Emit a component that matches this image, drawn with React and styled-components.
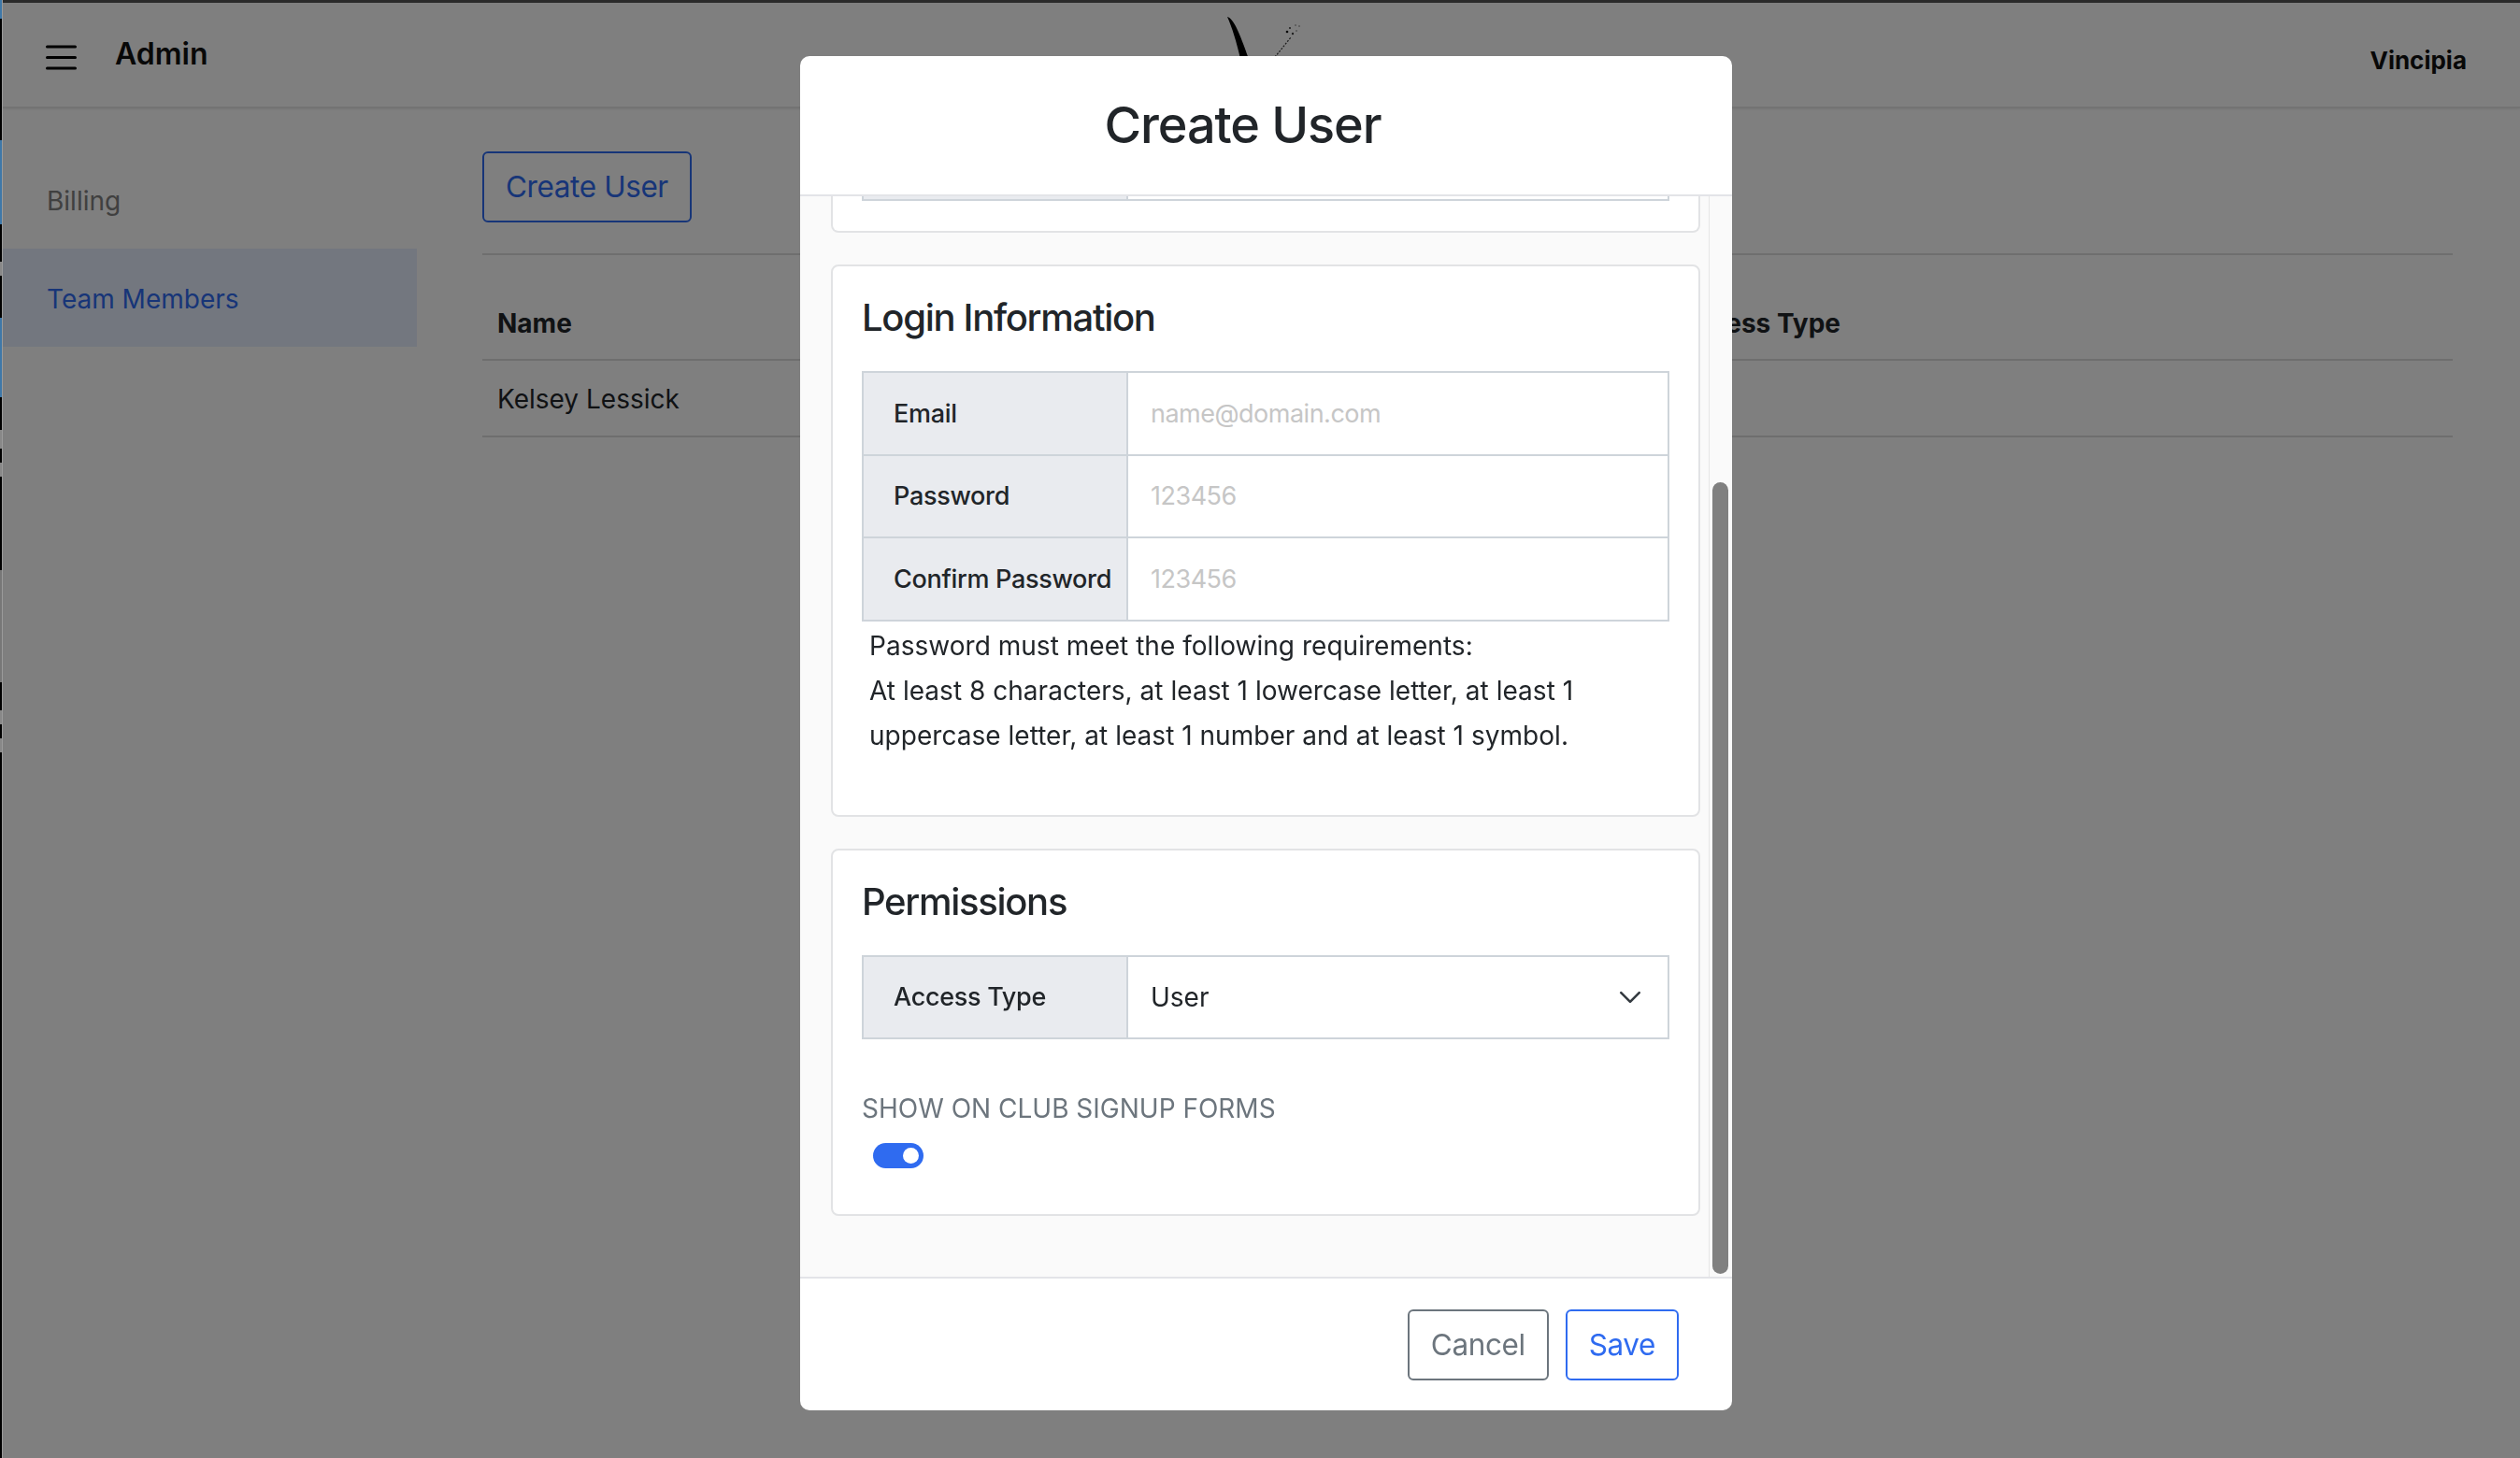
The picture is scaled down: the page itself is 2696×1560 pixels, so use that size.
import React from 'react'
import styled, { createGlobalStyle } from 'styled-components'

const GlobalStyle = createGlobalStyle`
    html, body {
        margin: 0;
        height: 100%;
        overflow: hidden;
    }
    body {
        font-family: Inter, "Liberation Sans", sans-serif;
        font-size: 28px;
        color: #212529;
        background: #fff;
    }
    * {
        box-sizing: border-box;
    }
`

const Page = styled.div`
    display: flex;
    width: 2696px;
    height: 1560px;
`

// sliver of the desktop showing behind the browser window
const DesktopEdge = styled.div`
    position: relative;
    z-index: 20;
    flex: 0 0 3px;
    border-right: 1px solid #9a9a9a;
    background: linear-gradient(
        to bottom,
        #3f78a8 0 20px, #000 20px 150px,
        #3f78a8 150px 240px, #000 240px 280px,
        #888 280px 295px, #000 295px 340px,
        #3f78a8 340px 425px, #000 425px 460px,
        #888 460px 480px, #000 480px 495px,
        #888 495px 510px, #000 510px 610px,
        #777 610px 730px, #000 730px 760px,
        #888 760px 775px, #000 775px 790px,
        #888 790px 805px, #000 805px
    );
`

const Main = styled.div`
    flex: 1;
    min-width: 0;
    display: flex;
    flex-direction: column;
    border-top: 3px solid #555;
`

const TopBar = styled.header`
    flex: 0 0 113px;
    display: grid;
    grid-template-columns: 1fr auto 1fr;
    padding: 0 57px 0 46px;
    border-bottom: 2px solid #e6e6e6;
    box-shadow: 0 1px 3px rgba(0, 0, 0, 0.08);
`

const TopLeft = styled.div`
    display: flex;
    align-items: center;
    gap: 41px;
    padding-bottom: 2px;
`

const Hamburger = styled.svg`
    width: 33px;
    height: 27px;
    margin-top: 8px;
`

const PageName = styled.div`
    font-size: 32px;
    font-weight: 600;
    color: #111;
    line-height: 40px;
`

const Logo = styled.svg`
    width: 85px;
    height: 55px;
    margin: 12px 0 0 14px;
`

const ClubName = styled.div`
    display: flex;
    align-items: center;
    justify-content: flex-end;
    padding-top: 11px;
    font-size: 26px;
    font-weight: 700;
    color: #111;
`

const Columns = styled.div`
    flex: 1;
    display: flex;
`

const SideNav = styled.nav`
    flex: 0 0 443px;
    padding-top: 45px;
`

const NavItem = styled.div`
    height: 105px;
    display: flex;
    align-items: center;
    padding: 3px 0 0 47px;
    font-size: 28px;
    color: ${p => (p.$active ? '#2f6bf0' : '#808080')};
    background: ${p => (p.$active ? '#e6eeff' : 'transparent')};
`

const Content = styled.main`
    flex: 1;
    padding: 46px 72px 0 70px;
`

const OutlineButton = styled.button`
    height: 76px;
    padding: 0 23px;
    font-family: inherit;
    font-size: 31.5px;
    letter-spacing: -0.4px;
    line-height: 1;
    color: ${p => p.$color};
    background: #fff;
    border: 2px solid ${p => p.$color};
    border-radius: 6px;
`

const Divider = styled.hr`
    margin: 33px 0 0;
    border: 0;
    border-top: 2px solid #dcdcdc;
`

const TableRow = styled.div`
    display: grid;
    grid-template-columns: 1261px 1fr;
    align-items: center;
    height: ${p => p.$height}px;
    margin-top: ${p => p.$top || 0}px;
    padding: ${p => (p.$head ? 0 : 2)}px 0 0 16px;
    border-bottom: 2px solid #dcdcdc;
    font-size: 28px;
    font-weight: ${p => (p.$head ? 700 : 400)};
    color: #212529;
`

const Overlay = styled.div`
    position: fixed;
    inset: 0;
    z-index: 10;
    display: flex;
    align-items: flex-start;
    padding: 60px 0 0 856px;
    background: rgba(0, 0, 0, 0.5);
`

const Modal = styled.div`
    width: 997px;
    height: 1449px;
    display: flex;
    flex-direction: column;
    overflow: hidden;
    background: #fff;
    border-radius: 10px;
`

const ModalHead = styled.div`
    flex: 0 0 150px;
    display: flex;
    align-items: center;
    justify-content: center;
    padding: 0 50px 1px 0;
    border-bottom: 2px solid #e3e4e8;
`

const ModalTitle = styled.h2`
    margin: 0;
    font-size: 54px;
    font-weight: 500;
    letter-spacing: -1.1px;
    color: #212529;
`

const ModalBody = styled.div`
    flex: 1;
    min-height: 0;
    display: flex;
    background: #fafafa;
`

const ScrollArea = styled.div`
    flex: 1;
    min-width: 0;
    overflow: hidden;
    padding: 0 9px 0 33px;
`

const ScrollTrack = styled.div`
    flex: 0 0 25px;
    padding: 306px 4px 0 3px;
    border-left: 1px solid #e6e6e6;
`

const ScrollThumb = styled.div`
    height: 847px;
    background: #808080;
    border-radius: 9px;
`

const Card = styled.section`
    margin-top: 34px;
    padding: ${p => p.$pad || '31px 31px 0'};
    padding-bottom: ${p => p.$bottom}px;
    background: #fff;
    border: 2px solid #e2e3e5;
    border-radius: 8px;
`

// the card above, scrolled almost out of view
const ScrolledCard = styled(Card)`
    margin-top: -103px;
    border-top: 0;
`

const CardTitle = styled.h3`
    margin: 0 0 33px;
    font-size: 40px;
    line-height: 48px;
    font-weight: 500;
    letter-spacing: -1.3px;
    color: #212529;
`

const FieldRow = styled.div`
    display: grid;
    grid-template-columns: 283px 1fr;
    height: ${p => p.$height || 90.5}px;
    margin-top: -2px;
    border: 2px solid #ced4da;
    &:first-of-type {
        margin-top: 0;
    }
`

const FieldLabel = styled.label`
    display: flex;
    align-items: center;
    padding-left: 32px;
    font-size: 27px;
    font-weight: 500;
    letter-spacing: -0.3px;
    background: #e9ebef;
    border-right: 2px solid #ced4da;
    white-space: nowrap;
`

const FieldInput = styled.input`
    min-width: 0;
    padding: 0 24px;
    border: 0;
    outline: 0;
    font-family: inherit;
    font-size: 27px;
    letter-spacing: -0.5px;
    color: #212529;
    background: #fff;
    &::placeholder {
        color: #c6c6c6;
        opacity: 1;
    }
`

const SelectBox = styled.div`
    display: flex;
    align-items: center;
    justify-content: space-between;
    padding: 0 27px 0 24px;
    font-size: 28px;
`

const Chevron = styled.svg`
    width: 26px;
    height: 26px;
`

const Hint = styled.div`
    padding: 2px 0 0 8px;
    font-size: 28px;
    line-height: 48px;
    letter-spacing: 0.03px;
    color: #212529;
`

const SwitchLabel = styled.div`
    margin-top: 56px;
    font-size: 28px;
    line-height: 36px;
    color: #6c757d;
`

const Switch = styled.div`
    display: flex;
    align-items: center;
    justify-content: flex-end;
    width: 54px;
    height: 27px;
    margin: 19px 0 0 12px;
    padding-right: 5px;
    background: #2f6bf0;
    border-radius: 14px;
    &::after {
        content: '';
        width: 17px;
        height: 17px;
        background: #fff;
        border-radius: 50%;
    }
`

const ModalFoot = styled.div`
    flex: 0 0 143px;
    display: flex;
    align-items: center;
    justify-content: flex-end;
    gap: 18px;
    padding-right: 57px;
    border-top: 2px solid #e3e4e8;
`

export default function App() {
    return (
        <Page>
            <GlobalStyle />
            <DesktopEdge />
            <Main>
                <TopBar>
                    <TopLeft>
                        <Hamburger viewBox="0 0 33 27">
                            <path d="M1.5 2h30M1.5 13.5h30M1.5 25h30" stroke="#000" strokeWidth="3" strokeLinecap="round" />
                        </Hamburger>
                        <PageName>Admin</PageName>
                    </TopLeft>
                    <Logo viewBox="0 0 85 55">
                        <path d="M4 3C11 5 17 20 27 48L18 48C14 30 9 14 4 3Z" fill="#000" />
                        <path d="M55 46L72 25" stroke="#333" strokeWidth="1.2" strokeDasharray="2 1.5" fill="none" />
                        <circle cx="68" cy="19" r="1.3" fill="#111" />
                        <circle cx="71" cy="15" r="0.9" fill="#222" />
                        <circle cx="74" cy="21" r="1.2" fill="#444" />
                        <circle cx="77" cy="12" r="0.7" fill="#555" />
                        <circle cx="81" cy="13" r="0.7" fill="#555" />
                        <circle cx="78" cy="18" r="0.7" fill="#555" />
                    </Logo>
                    <ClubName>Vincipia</ClubName>
                </TopBar>
                <Columns>
                    <SideNav>
                        <NavItem>Billing</NavItem>
                        <NavItem $active>Team Members</NavItem>
                    </SideNav>
                    <Content>
                        <OutlineButton $color="#2f6bf0">Create User</OutlineButton>
                        <Divider />
                        <TableRow $head $height={78} $top={35}>
                            <div>Name</div>
                            <div>Access Type</div>
                        </TableRow>
                        <TableRow $height={82}>
                            <div>Kelsey Lessick</div>
                        </TableRow>
                    </Content>
                </Columns>
            </Main>
            <Overlay>
                <Modal>
                    <ModalHead>
                        <ModalTitle>Create User</ModalTitle>
                    </ModalHead>
                    <ModalBody>
                        <ScrollArea>
                            <ScrolledCard $pad="0 31px" $bottom={32}>
                                <FieldRow $height={108}>
                                    <FieldLabel />
                                    <div />
                                </FieldRow>
                            </ScrolledCard>
                            <Card $bottom={61}>
                                <CardTitle>Login Information</CardTitle>
                                <FieldRow>
                                    <FieldLabel>Email</FieldLabel>
                                    <FieldInput placeholder="name@domain.com" />
                                </FieldRow>
                                <FieldRow>
                                    <FieldLabel>Password</FieldLabel>
                                    <FieldInput placeholder="123456" />
                                </FieldRow>
                                <FieldRow>
                                    <FieldLabel>Confirm Password</FieldLabel>
                                    <FieldInput placeholder="123456" />
                                </FieldRow>
                                <Hint>
                                    Password must meet the following requirements:
                                    <br />
                                    At least 8 characters, at least 1 lowercase letter, at least 1 uppercase letter, at least 1 number and at least 1 symbol.
                                </Hint>
                            </Card>
                            <Card $bottom={49}>
                                <CardTitle>Permissions</CardTitle>
                                <FieldRow $height={90}>
                                    <FieldLabel>Access Type</FieldLabel>
                                    <SelectBox>
                                        User
                                        <Chevron viewBox="0 0 16 16">
                                            <path d="M2 5l6 6 6-6" stroke="#343a40" strokeWidth="1.6" strokeLinecap="round" strokeLinejoin="round" fill="none" />
                                        </Chevron>
                                    </SelectBox>
                                </FieldRow>
                                <SwitchLabel>SHOW ON CLUB SIGNUP FORMS</SwitchLabel>
                                <Switch />
                            </Card>
                        </ScrollArea>
                        <ScrollTrack>
                            <ScrollThumb />
                        </ScrollTrack>
                    </ModalBody>
                    <ModalFoot>
                        <OutlineButton $color="#6c757d">Cancel</OutlineButton>
                        <OutlineButton $color="#2f6bf0">Save</OutlineButton>
                    </ModalFoot>
                </Modal>
            </Overlay>
        </Page>
    )
}
